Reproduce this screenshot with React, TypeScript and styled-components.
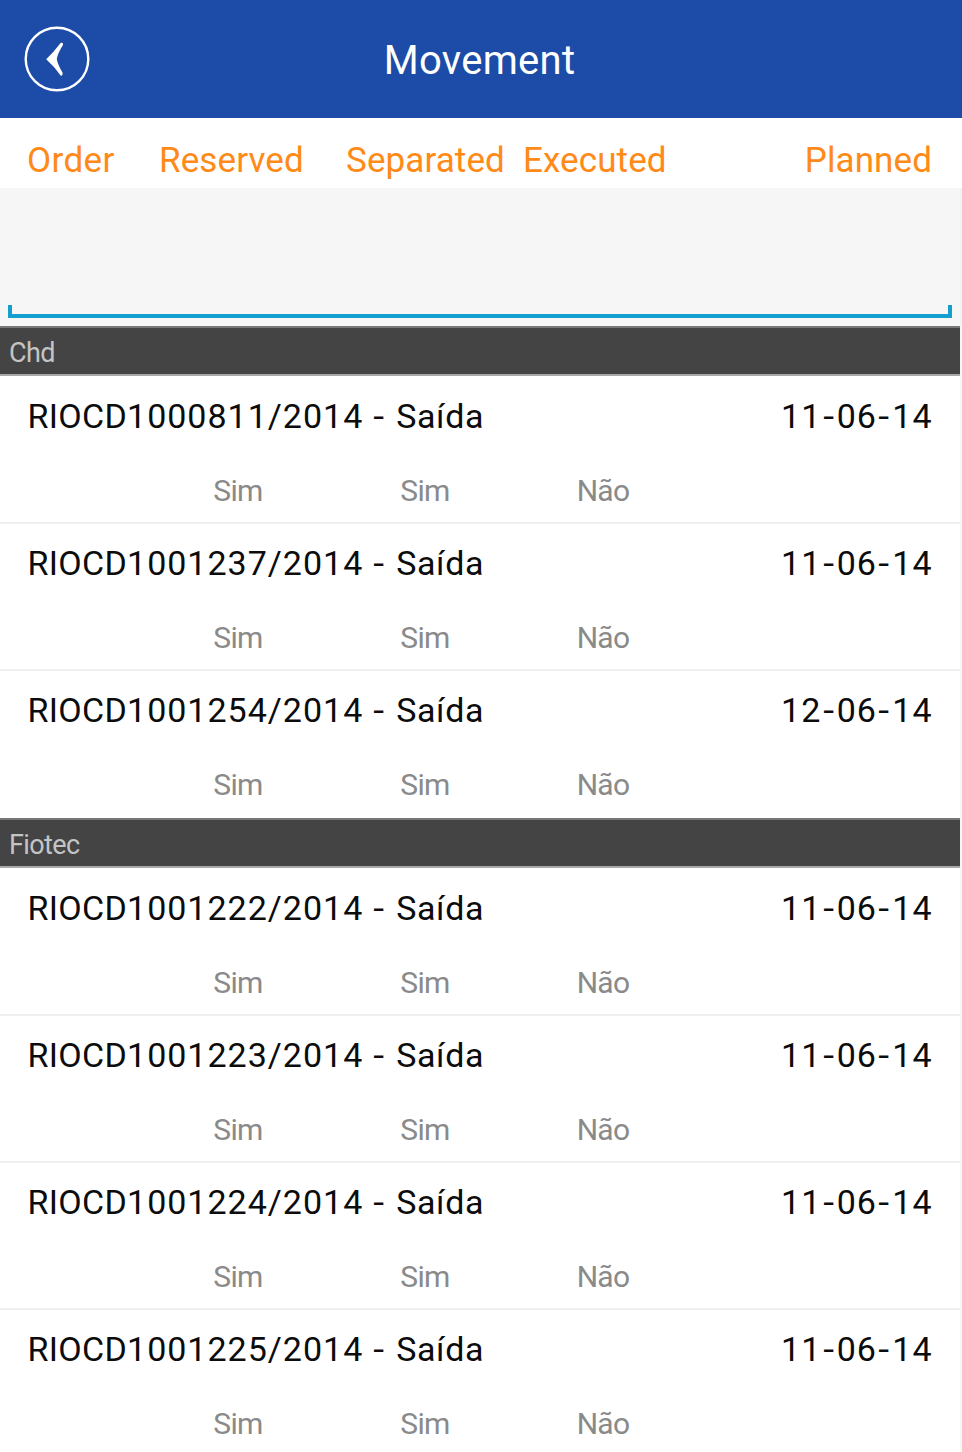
import React from "react";
import styled, { createGlobalStyle } from "styled-components";

const GlobalStyle = createGlobalStyle`
  * { box-sizing: border-box; }
  body {
    margin: 0;
    background: #fff;
    font-family: Roboto, "Liberation Sans", sans-serif;
    overflow: hidden;
  }
`;

const Screen = styled.main`
  display: flex;
  flex-direction: column;
  width: 962px;
  height: 1452px;
  overflow: hidden;
  background: #fff;
`;

const TopBar = styled.header`
  flex: none;
  display: grid;
  grid-template-columns: 114px 1fr 117px;
  align-items: center;
  height: 118px;
  background: #1c4ca7;
`;

const BackButton = styled.button`
  width: 66px;
  height: 66px;
  margin-left: 24px;
  padding: 0;
  border: 0;
  background: none;
  svg { display: block; }
`;

const Title = styled.h1`
  margin: 0;
  padding-top: 4px;
  text-align: center;
  color: #fff;
  font-size: 40px;
  line-height: 48px;
  font-weight: 400;
  letter-spacing: 0.3px;
`;

const ColumnBar = styled.div`
  flex: none;
  display: grid;
  grid-template-columns: 132px 187px 177px 1fr auto;
  height: 70px;
  padding: 22px 30px 0 27px;
  color: #ff8a17;
  font-size: 35px;
  line-height: 42px;
  letter-spacing: 0.1px;
  white-space: nowrap;
`;

const FirstColumn = styled.span`
  letter-spacing: 0.4px;
`;

const FilterArea = styled.div`
  flex: none;
  height: 138px;
  padding: 116px 10px 0 8px;
  border-right: 2px solid #f2f2f2;
  padding-right: 8px;
  background: #f6f6f6;
`;

const FilterField = styled.div`
  height: 14px;
  padding-top: 1px;
  border: 4px solid #149fce;
  border-top: 0;
  clip-path: inset(1px 0 0 0);
`;

const List = styled.div`
  flex: none;
  border-right: 2px solid #f6f6f6;
`;

const SectionTitle = styled.h2`
  height: 50px;
  margin: 0;
  padding: 9px 9px 0;
  border-top: 2px solid #777;
  border-bottom: 2px solid #a8a8a8;
  background: #444;
  color: #c4c4c4;
  font-size: 27px;
  line-height: 32px;
  font-weight: 400;
  letter-spacing: -0.6px;
`;

const Rows = styled.div`
  padding-bottom: 2px;
`;

const Row = styled.article`
  height: 147px;
  padding: 19px 27.5px 0 27.5px;
  border-top: 2px solid #efefef;
  &:first-child {
    height: 146px;
    padding-top: 20px;
    border-top: 0;
  }
`;

const RowHead = styled.div`
  display: flex;
  justify-content: space-between;
  color: #0c0c0c;
  font-size: 34px;
  line-height: 40px;
  letter-spacing: 1px;
  white-space: nowrap;
`;

const Prefix = styled.span`
  letter-spacing: 0.3px;
`;

const Kind = styled.span`
  margin-left: 0.8px;
  letter-spacing: 0.65px;
`;

const Dash = styled.span<{ $gap: number }>`
  display: inline-block;
  margin: 0 ${(p) => p.$gap}px;
  transform: scaleX(1.15);
`;

const RowFlags = styled.div`
  display: grid;
  grid-template-columns: 187px 187px 169px;
  margin: 37px 0 0 117px;
  color: #8a8a8a;
  font-size: 30px;
  line-height: 36px;
  letter-spacing: -0.7px;
  text-align: center;
`;

const sections = [
  {
    name: "Chd",
    orders: [
      ["1000811/2014", "11-06-14"],
      ["1001237/2014", "11-06-14"],
      ["1001254/2014", "12-06-14"],
    ],
  },
  {
    name: "Fiotec",
    orders: [
      ["1001222/2014", "11-06-14"],
      ["1001223/2014", "11-06-14"],
      ["1001224/2014", "11-06-14"],
      ["1001225/2014", "11-06-14"],
    ],
  },
];

function PlannedDate({ value }: { value: string }) {
  return (
    <span>
      {value.split("-").map((part, i) => (
        <React.Fragment key={i}>
          {i > 0 && <Dash $gap={2.5}>-</Dash>}
          {part}
        </React.Fragment>
      ))}
    </span>
  );
}

export default function App() {
  return (
    <>
      <GlobalStyle />
      <Screen>
        <TopBar>
          <BackButton aria-label="Back">
            <svg width="66" height="66" viewBox="0 0 66 66">
              <circle cx="33" cy="33" r="31.3" fill="none" stroke="#fff" strokeWidth="2.4" />
              <path
                d="M36.800 16.800Q39.600 16 39 19Q33.600 27.500 32.800 33Q33.500 38 38.500 46.600Q39 50 36.800 49.700Q31 41 22.200 33.200Q29.500 26.500 36.800 16.800Z"
                fill="#fff"
              />
            </svg>
          </BackButton>
          <Title>Movement</Title>
        </TopBar>
        <ColumnBar>
          <FirstColumn>Order</FirstColumn>
          <span>Reserved</span>
          <span>Separated</span>
          <span>Executed</span>
          <span>Planned</span>
        </ColumnBar>
        <FilterArea>
          <FilterField />
        </FilterArea>
        <List>
          {sections.map((section) => (
            <section key={section.name}>
              <SectionTitle>{section.name}</SectionTitle>
              <Rows>
                {section.orders.map(([code, date]) => (
                  <Row key={code}>
                    <RowHead>
                      <span>
                        <Prefix>RIOCD</Prefix>
                        {code} <Dash $gap={1.4}>-</Dash> <Kind>Saída</Kind>
                      </span>
                      <PlannedDate value={date} />
                    </RowHead>
                    <RowFlags>
                      <span>Sim</span>
                      <span>Sim</span>
                      <span>Não</span>
                    </RowFlags>
                  </Row>
                ))}
              </Rows>
            </section>
          ))}
        </List>
      </Screen>
    </>
  );
}
